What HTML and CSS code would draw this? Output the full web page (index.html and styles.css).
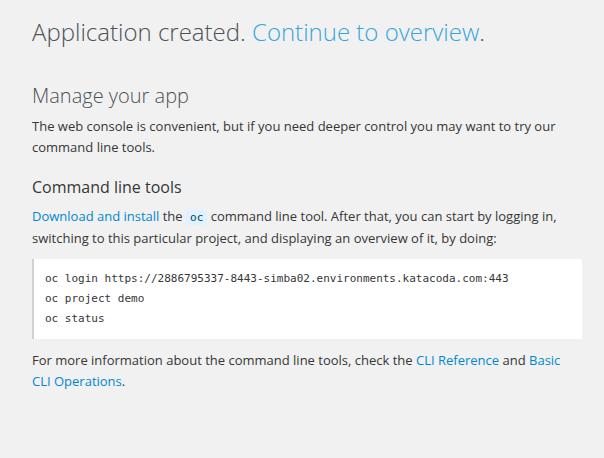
FILE: index.html
```html
<!DOCTYPE html>
<html>
<head>
<meta charset="utf-8">
<link rel="stylesheet" href="styles.css">
</head>
<body>
<div class="page">
  <h1 class="title">Application created. <a href="#" class="title-link">Continue to overview</a>.</h1>
  <h2 class="section-title">Manage your app</h2>
  <p class="text">The web console is convenient, but if you need deeper control you may want to try our command line tools.</p>
  <h3 class="sub-title">Command line tools</h3>
  <p class="text"><a href="#" class="link">Download and install</a> the <code class="inline-code">oc</code> command line tool. After that, you can start by logging in, switching to this particular project, and displaying an overview of it, by doing:</p>
  <pre class="code-block">oc login https://2886795337-8443-simba02.environments.katacoda.com:443
oc project demo
oc status</pre>
  <p class="text">For more information about the command line tools, check the <a href="#" class="link">CLI Reference</a> and <a href="#" class="link">Basic CLI Operations</a>.</p>
</div>
</body>
</html>
```
FILE: styles.css
```css
html, body {
  margin: 0;
  padding: 0;
  background: #f1f1f1;
}
body {
  font-family: "Open Sans", "Liberation Sans", sans-serif;
  color: #363636;
  font-size: 13px;
}
.page {
  padding: 14px 22px 20px 32px;
}
a {
  text-decoration: none;
}
.title {
  font-size: 24px;
  font-weight: 300;
  color: #4d5258;
  margin: 0 0 32px 0;
  line-height: 36px;
}
.title-link {
  color: #39a5dc;
}
.section-title {
  font-size: 20px;
  font-weight: 300;
  color: #4d5258;
  margin: 0 0 6px 0;
  line-height: 28px;
}
.text {
  margin: 0 0 10px 0;
  line-height: 21px;
}
.sub-title {
  font-size: 16px;
  font-weight: 400;
  color: #363636;
  margin: 17px 0 7px 0;
  line-height: 24px;
}
.link {
  color: #0088ce;
}
.inline-code {
  font-family: "DejaVu Sans Mono", monospace;
  font-size: 11px;
  background: #def3ff;
  color: #004368;
  padding: 1px 4px;
}
.code-block {
  font-family: "DejaVu Sans Mono", monospace;
  font-size: 11px;
  line-height: 20px;
  color: #363636;
  background: #fff;
  border-left: 2px solid #d1d1d1;
  margin: 8px 0 11px 0;
  padding: 10px 11px;
}
```
